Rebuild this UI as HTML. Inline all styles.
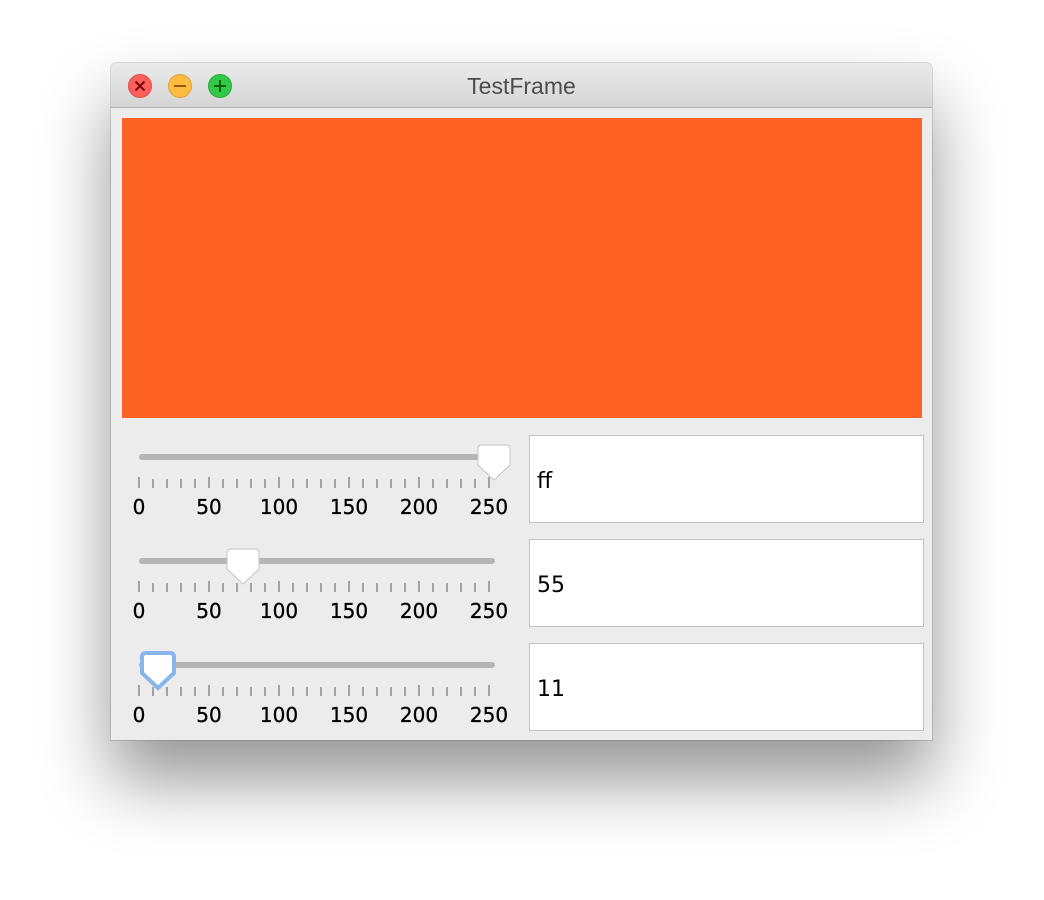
<!DOCTYPE html><html><head><style>
body{margin:0;width:1044px;height:900px;background:#fff;position:relative;overflow:hidden;font-family:"DejaVu Sans","Liberation Sans",sans-serif}
.win{position:absolute;left:111px;top:63px;width:821px;height:677px;background:#ececec;border-radius:6px 6px 0 0;box-shadow:0 40px 70px rgba(0,0,0,.42),0 0 0 1px rgba(0,0,0,.12);overflow:hidden}
.tb{position:absolute;left:0;top:0;width:821px;height:44px;background:linear-gradient(#ebebeb,#d5d5d5);border-bottom:1px solid #b2b2b2}
.title{position:absolute;left:0;right:0;top:10px;text-align:center;font-family:"Liberation Sans",sans-serif;font-size:23px;color:#4d4d4d}
.orange{position:absolute;left:11px;top:55px;width:800px;height:300px;background:#ff6324}
.tf{position:absolute;left:418px;width:395px;height:88px;background:#fff;border:1px solid #c3c3c3;font-size:22px;line-height:92px;padding-left:7px;box-sizing:border-box}
svg{position:absolute;left:0;top:0}
</style></head><body>
<div class="win">
<div class="tb"><div class="title">TestFrame</div>
<svg width="140" height="44"><g stroke-width="1">
<circle cx="29" cy="23" r="11.5" fill="#fc605b" stroke="#de4a44"/><path d="M24.5 18.5l9 9M33.5 18.5l-9 9" stroke="#7e0507" stroke-width="2"/>
<circle cx="69" cy="23" r="11.5" fill="#fdbc40" stroke="#dea236"/><path d="M63 23h12" stroke="#985712" stroke-width="2"/>
<circle cx="109" cy="23" r="11.5" fill="#34c84a" stroke="#27a839"/><path d="M103 23h12M109 17v12" stroke="#0b650d" stroke-width="2"/>
</g></svg></div>
<div class="orange"></div>
<svg width="821" height="677" id="s"></svg>
<div class="tf" style="top:372px">ff</div>
<div class="tf" style="top:476px">55</div>
<div class="tf" style="top:580px">11</div>
</div>
<script>
var s=document.getElementById('s'),h='';
[[394,383,0],[498,132,0],[602,47,1]].forEach(function(r){var y=r[0];
h+='<line x1="31" y1="'+y+'" x2="381" y2="'+y+'" stroke="#b5b5b5" stroke-width="6" stroke-linecap="round"/>';
for(var i=0;i<26;i++){var x=28+i*14;var maj=i%5==0;h+='<line x1="'+x+'" x2="'+x+'" y1="'+(y+(maj?20:22))+'" y2="'+(y+31)+'" stroke="#8a8a8a" stroke-width="1.5"/>';}
['0','50','100','150','200','250'].forEach(function(t,k){h+='<text x="'+(28+k*70)+'" y="'+(y+57)+'" font-size="20" text-anchor="middle" fill="#000" stroke="#000" stroke-width="0.3">'+t+'</text>';});
var cx=r[1];var p='M'+(cx-16)+' '+(y-8)+'q0-4 4-4h24q4 0 4 4v16l-16 15l-16-15z';
if(r[2])h+='<path d="'+p+'" fill="#fff" stroke="#88b6ec" stroke-width="4"/>';
else h+='<path d="'+p+'" fill="#fff" stroke="#c4c4c4" stroke-width="1"/>';
});
s.innerHTML=h;
</script>
</body></html>
